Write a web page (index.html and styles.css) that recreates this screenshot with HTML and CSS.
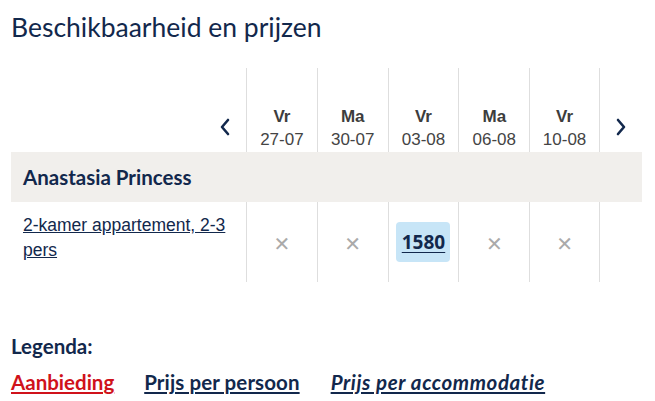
FILE: index.html
```html
<!DOCTYPE html>
<html lang="nl">
<head>
<meta charset="utf-8">
<title>Beschikbaarheid en prijzen</title>
<link rel="stylesheet" href="styles.css">
</head>
<body>
<div class="page">
  <h2 class="title">Beschikbaarheid en prijzen</h2>
  <div class="grid">
    <div class="cell nav nav-prev">
      <svg width="12" height="18" viewBox="0 0 12 18"><path d="M9 2 L3 9 L9 16" fill="none" stroke="#12284c" stroke-width="2.6" stroke-linecap="round" stroke-linejoin="round"/></svg>
    </div>
    <div class="cell day"><b>Vr</b><span>27-07</span></div>
    <div class="cell day"><b>Ma</b><span>30-07</span></div>
    <div class="cell day"><b>Vr</b><span>03-08</span></div>
    <div class="cell day"><b>Ma</b><span>06-08</span></div>
    <div class="cell day last"><b>Vr</b><span>10-08</span></div>
    <div class="cell nav nav-next">
      <svg width="12" height="18" viewBox="0 0 12 18"><path d="M3 2 L9 9 L3 16" fill="none" stroke="#12284c" stroke-width="2.6" stroke-linecap="round" stroke-linejoin="round"/></svg>
    </div>

    <div class="band">Anastasia Princess</div>

    <div class="cell room"><a href="#">2-kamer appartement, 2-3 pers</a></div>
    <div class="cell price"><span class="na">&#x2715;</span></div>
    <div class="cell price"><span class="na">&#x2715;</span></div>
    <div class="cell price"><a class="avail" href="#">1580</a></div>
    <div class="cell price"><span class="na">&#x2715;</span></div>
    <div class="cell price last"><span class="na">&#x2715;</span></div>
    <div class="cell"></div>
  </div>

  <div class="legend">
    <div class="legend-title">Legenda:</div>
    <div class="legend-items">
      <a href="#" class="lg offer">Aanbieding</a>
      <a href="#" class="lg pp">Prijs per persoon</a>
      <a href="#" class="lg italic">Prijs per accommodatie</a>
    </div>
  </div>
</div>
</body>
</html>
```

FILE: styles.css
```css
* { box-sizing: border-box; }
html, body { margin: 0; padding: 0; background: #fff; }
body { font-family: "Lato", "Open Sans", sans-serif; color: #12284c; }
.page { padding: 0 13px 0 11px; }
.title {
  margin: 0;
  padding-top: 12px;
  height: 68px;
  font-size: 26.5px;
  font-weight: 400;
  line-height: 30px;
  color: #12284c;
}
.grid {
  display: grid;
  grid-template-columns: 235px repeat(5, 70.8px) 42px;
  grid-template-rows: 84px 50px 80px;
}
.cell { display: flex; }
.nav { align-items: flex-end; padding-bottom: 16px; }
.nav-prev { justify-content: flex-end; padding-right: 15px; }
.nav-next { justify-content: flex-start; padding-left: 15px; }
.day, .price { border-left: 1px solid #dedede; }
.day.last, .price.last { border-right: 1px solid #dedede; }
.day {
  flex-direction: column;
  justify-content: flex-end;
  align-items: center;
  padding-bottom: 1px;
  font-family: "Liberation Sans", Arial, sans-serif;
  font-size: 17px;
  line-height: 23px;
  color: #444;
}
.day b { font-weight: 700; color: #3d3d3d; }
.band {
  grid-column: 1 / -1;
  background: #f1efec;
  padding: 0 12px;
  display: flex;
  align-items: center;
  font-size: 20.5px;
  font-weight: 700;
  color: #12284c;
}
.room { padding: 11px 12px 0 12px; font-family: "Liberation Sans", Arial, sans-serif; font-size: 17.5px; line-height: 25px; }
.room a { color: #12284c; text-decoration: underline; }
.price { align-items: center; justify-content: center; padding-top: 3px; }
.na { color: #aaa; font-family: "DejaVu Sans", sans-serif; font-size: 20px; }
.avail {
  background: #c7e5f7;
  border-radius: 4px;
  width: 54px;
  height: 40px;
  margin-top: -3px;
  display: flex;
  align-items: center;
  justify-content: center;
  font-family: "Open Sans", sans-serif;
  font-weight: 700;
  font-size: 19px;
  color: #12284c;
  text-decoration: underline;
  text-underline-offset: 3px;
}
.legend { padding-top: 52px; }
.legend-title { font-size: 20.5px; font-weight: 700; line-height: 25px; }
.legend-items { display: flex; margin-top: 11px; font-size: 20.5px; font-weight: 700; line-height: 25px; }
.lg { color: #12284c; text-decoration: underline; }
.lg.offer { color: #d0121b; margin-right: 30px; }
.lg.pp { letter-spacing: 0.1px; margin-right: 31px; }
.lg.italic { font-style: italic; letter-spacing: 0.6px; }
```
